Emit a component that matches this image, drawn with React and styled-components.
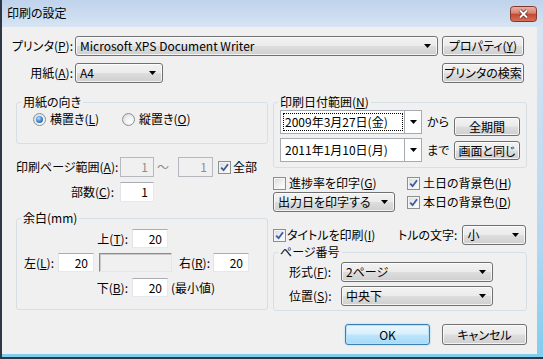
import React from 'react'
import styled, { createGlobalStyle, css } from 'styled-components'

const GlobalStyle = createGlobalStyle`
  html, body { margin: 0; padding: 0; background: #ffffff; }
  body {
    font-family: "Noto Sans CJK JP", "Liberation Sans", sans-serif;
    font-feature-settings: "palt";
    font-size: 12px;
    line-height: 14px;
    color: #000;
  }
  u { text-decoration: underline; text-underline-offset: 1px; }
`

const Window = styled.div`
  width: 543px;
  height: 359px;
  box-sizing: border-box;
  display: flex;
  flex-direction: column;
  background: linear-gradient(#bfd3ec 0, #d7e4f3 27px, #b4d6f0 70%, #7fcdee 100%);
  border-left: 2px solid #2e3845;
  border-bottom: 2px solid #2e3845;
  overflow: hidden;
`

const TitleBar = styled.div`
  height: 27px;
  flex: none;
  display: flex;
  align-items: center;
  justify-content: space-between;
  padding: 0 6px 0 5px;
`

const Title = styled.span`
  margin-top: -1px;
`

const Client = styled.div`
  flex: 1;
  margin: 0 6px 3px 0;
  background: #f0f0f0;
  padding: 9px 10px 0 14px;
  display: flex;
  flex-direction: column;
`

const TopGrid = styled.div`
  display: grid;
  grid-template-columns: 57px 363px 84px;
  grid-auto-rows: 20px;
  column-gap: 2px;
  row-gap: 7px;
  align-items: center;
  & > span { justify-self: end; }
`

const Label = styled.span`
  text-align: ${p => (p.$left ? 'left' : 'right')};
  white-space: nowrap;
  ${p => p.$w && css`width: ${p.$w}px; flex: none;`}
  ${p => p.$ml && css`margin-left: ${p.$ml}px;`}
  color: ${p => (p.$dim ? '#8d8d8d' : '#000')};
`

const buttonFace = css`
  border: 1px solid #707070;
  border-radius: 3px;
  background: linear-gradient(#f2f2f2 0%, #ebebeb 48%, #dddddd 52%, #cfcfcf 100%);
  box-shadow: inset 0 0 0 1px rgba(255, 255, 255, 0.75);
`

const Button = styled.div`
  ${buttonFace}
  box-sizing: border-box;
  width: ${p => p.$w}px;
  height: ${p => p.$h || 20}px;
  justify-self: end;
  display: flex;
  align-items: center;
  justify-content: center;
  white-space: nowrap;
  ${p =>
    p.$default &&
    css`
      border-color: #3c7fb1;
      background: linear-gradient(#eaf6fd 0%, #d9f0fc 48%, #bee6fd 52%, #a7d9f5 100%);
      box-shadow: inset 0 0 0 1px #b9e0f7, 0 0 2px #8fd0f2;
    `}
`

const Combo = styled.div`
  ${buttonFace}
  box-sizing: border-box;
  width: ${p => p.$w}px;
  height: 20px;
  display: flex;
  align-items: center;
  justify-content: space-between;
  padding: 0 6px 0 4px;
  white-space: nowrap;
  flex: none;
  ${p => p.$ml && css`margin-left: ${p.$ml}px;`}
`

const ArrowIcon = () => (
  <svg width="7" height="4" viewBox="0 0 7 4" style={{ flex: 'none' }}>
    <path d="M0 0h7L3.5 4z" fill="#000" />
  </svg>
)

const Middle = styled.div`
  display: grid;
  grid-template-columns: 252px 254px;
  column-gap: 5px;
  margin-top: 12px;
`

const Column = styled.div`
  display: flex;
  flex-direction: column;
`

const Group = styled.fieldset`
  margin: ${p => p.$mt || 0}px 0 0 0;
  padding: 0;
  min-width: 0;
  border: 1px solid #d5dfe5;
  border-radius: 3px;
`

const Legend = styled.legend`
  padding: 0 2px;
  margin-left: 4px;
  line-height: 14px;
`

const GroupBody = styled.div`
  padding: ${p => p.$pad};
`

const RadioRow = styled.div`
  display: grid;
  grid-template-columns: 89px auto;
  height: 14px;
  align-items: center;
`

const Option = styled.label`
  display: flex;
  align-items: center;
  white-space: nowrap;
  ${p => p.$w && css`width: ${p.$w}px; flex: none;`}
`

const RadioDot = styled.span`
  width: 13px;
  height: 13px;
  box-sizing: border-box;
  border-radius: 50%;
  border: 1px solid #8a8f96;
  background: radial-gradient(circle at 65% 65%, #ffffff 0, #f1f1f1 40%, #cfd2d6 100%);
  display: inline-flex;
  align-items: center;
  justify-content: center;
  margin-right: 4px;
  flex: none;
  &::after {
    content: '';
    width: 7px;
    height: 7px;
    border-radius: 50%;
    background: radial-gradient(circle at 40% 35%, #bfe4fb 0, #4a8fd6 45%, #10478f 100%);
    display: ${p => (p.$on ? 'block' : 'none')};
  }
`

const CheckBox = styled.span`
  width: 13px;
  height: 13px;
  box-sizing: border-box;
  border: 1px solid #8e8f8f;
  background: linear-gradient(135deg, #d9dadb 0%, #f2f2f2 60%, #ffffff 100%);
  box-shadow: inset 0 0 0 1px #f4f4f4;
  display: inline-flex;
  align-items: center;
  justify-content: center;
  margin-right: ${p => p.$gap ?? 3}px;
  flex: none;
`

const Check = ({ on, gap, children, w }) => (
  <Option $w={w}>
    <CheckBox $gap={gap}>
      {on && (
        <svg width="9" height="9" viewBox="0 0 9 9">
          <path d="M1.2 4.6 L3.6 7.2 L8 1.2" fill="none" stroke="#3b5aa0" strokeWidth="1.8" />
        </svg>
      )}
    </CheckBox>
    <span>{children}</span>
  </Option>
)

const FormRow = styled.div`
  display: flex;
  align-items: center;
  height: ${p => p.$h || 20}px;
  margin-top: ${p => p.$mt || 0}px;
  ${p => p.$ml && css`padding-left: ${p.$ml}px;`}
`

const Field = styled.div`
  box-sizing: border-box;
  width: ${p => p.$w}px;
  height: ${p => p.$h || 20}px;
  flex: none;
  border: 1px solid;
  border-color: ${p => (p.$disabled ? '#b5b9bd' : '#abadb3 #e3e9ef #e3e9ef #e2e3ea')};
  background: ${p => (p.$disabled ? '#f0f0f0' : '#ffffff')};
  color: ${p => (p.$disabled ? '#8d8d8d' : '#000')};
  display: flex;
  align-items: center;
  justify-content: flex-end;
  padding-right: 5px;
  ${p => p.$ml && css`margin-left: ${p.$ml}px;`}
`

const Sunken = styled.div`
  box-sizing: border-box;
  width: 73px;
  height: 19px;
  flex: none;
  margin-left: 5px;
  border: 1px solid;
  border-color: #8c8c8c #e6e6e6 #e6e6e6 #8c8c8c;
  box-shadow: inset 1px 1px 0 #c8c8c8;
  background: #f0f0f0;
`

const DateArea = styled.div`
  display: flex;
  align-items: flex-start;
`

const DateCol = styled.div`
  display: flex;
  flex-direction: column;
  gap: 4px;
`

const DateRow = styled.div`
  display: flex;
  align-items: center;
  gap: 5px;
`

const DateBox = styled.div`
  box-sizing: border-box;
  width: 142px;
  height: 24px;
  display: flex;
  border: 1px solid #a6abb2;
  background: #fff;
`

const DateText = styled.span`
  flex: 1;
  margin: 2px 1px 2px 2px;
  padding-left: 1px;
  display: flex;
  align-items: center;
  white-space: nowrap;
  border: 1px dotted ${p => (p.$focus ? '#000' : 'transparent')};
`

const DateDrop = styled.span`
  width: 16px;
  flex: none;
  border-left: 1px solid #a6abb2;
  display: flex;
  align-items: center;
  justify-content: center;
`

const DateButtons = styled.div`
  margin-left: auto;
  padding-top: 7px;
  display: flex;
  flex-direction: column;
  gap: 5px;
`

const CheckGrid = styled.div`
  display: grid;
  grid-template-columns: 134px auto;
  grid-template-rows: 14px 20px;
  row-gap: 2px;
  align-items: center;
  margin-top: 8px;
`

const PageGrid = styled.div`
  display: grid;
  grid-template-columns: 52px 152px;
  grid-auto-rows: 20px;
  row-gap: 4px;
  align-items: center;
`

const Footer = styled.div`
  display: flex;
  justify-content: flex-end;
  gap: 12px;
  margin-top: 13px;
`

const CloseIcon = () => (
  <svg width="27" height="16" viewBox="0 0 27 16">
    <defs>
      <linearGradient id="closeFace" x1="0" y1="0" x2="0" y2="1">
        <stop offset="0" stopColor="#eab3a6" />
        <stop offset="0.45" stopColor="#d9826f" />
        <stop offset="0.5" stopColor="#c5472f" />
        <stop offset="1" stopColor="#d4735a" />
      </linearGradient>
    </defs>
    <rect x="0.5" y="0.5" width="26" height="15" rx="3" fill="url(#closeFace)" stroke="#7e3a30" />
    <path d="M10 4.5 L17 11.5 M17 4.5 L10 11.5" stroke="#5a2219" strokeWidth="3.4" />
    <path d="M10 4.5 L17 11.5 M17 4.5 L10 11.5" stroke="#ffffff" strokeWidth="2" />
  </svg>
)

export default function App() {
  return (
    <>
      <GlobalStyle />
      <Window>
        <TitleBar>
          <Title>印刷の設定</Title>
          <CloseIcon />
        </TitleBar>
        <Client>
          <TopGrid>
            <Label>プリンタ(<u>P</u>):</Label>
            <Combo $w={363}>
              <span>Microsoft XPS Document Writer</span>
              <ArrowIcon />
            </Combo>
            <Button $w={82}>プロパティ(<u>Y</u>)</Button>
            <Label>用紙(<u>A</u>):</Label>
            <Combo $w={88}>
              <span>A4</span>
              <ArrowIcon />
            </Combo>
            <Button $w={82}>プリンタの検索</Button>
          </TopGrid>

          <Middle>
            <Column>
              <Group>
                <Legend>用紙の向き</Legend>
                <GroupBody $pad="3px 0 17px 16px">
                  <RadioRow>
                    <Option>
                      <RadioDot $on />
                      <span>横置き(<u>L</u>)</span>
                    </Option>
                    <Option>
                      <RadioDot />
                      <span>縦置き(<u>O</u>)</span>
                    </Option>
                  </RadioRow>
                </GroupBody>
              </Group>

              <FormRow $mt={13}>
                <Label $w={98}>印刷ページ範囲(<u>A</u>):</Label>
                <Field $w={34} $ml={6} $disabled>1</Field>
                <Label $dim $ml={3}>～</Label>
                <Field $w={35} $ml={9} $disabled>1</Field>
                <Option style={{ marginLeft: 5 }}>
                  <Check on gap={2}>全部</Check>
                </Option>
              </FormRow>
              <FormRow $mt={5}>
                <Label $w={98}>部数(<u>C</u>):</Label>
                <Field $w={34} $ml={6}>1</Field>
              </FormRow>

              <Group $mt={9}>
                <Legend>余白(mm)</Legend>
                <GroupBody $pad="4px 0 12px 0">
                  <FormRow $h={19} $ml={71}>
                    <Label $w={40}>上(<u>T</u>):</Label>
                    <Field $w={36} $h={19} $ml={4}>20</Field>
                  </FormRow>
                  <FormRow $h={19} $mt={5} $ml={2}>
                    <Label $w={35}>左(<u>L</u>):</Label>
                    <Field $w={36} $h={19} $ml={4}>20</Field>
                    <Sunken />
                    <Label $w={38}>右(<u>R</u>):</Label>
                    <Field $w={36} $h={19} $ml={3}>20</Field>
                  </FormRow>
                  <FormRow $h={19} $mt={6} $ml={71}>
                    <Label $w={40}>下(<u>B</u>):</Label>
                    <Field $w={36} $h={19} $ml={4}>20</Field>
                    <Label $ml={3}>(最小値)</Label>
                  </FormRow>
                </GroupBody>
              </Group>
            </Column>

            <Column>
              <Group>
                <Legend>印刷日付範囲(<u>N</u>)</Legend>
                <GroupBody $pad="1px 6px 5px 6px">
                  <DateArea>
                    <DateCol>
                      <DateRow>
                        <DateBox>
                          <DateText $focus>2009年3月27日(金)</DateText>
                          <DateDrop><ArrowIcon /></DateDrop>
                        </DateBox>
                        <span>から</span>
                      </DateRow>
                      <DateRow>
                        <DateBox>
                          <DateText>2011年1月10日(月)</DateText>
                          <DateDrop><ArrowIcon /></DateDrop>
                        </DateBox>
                        <span>まで</span>
                      </DateRow>
                    </DateCol>
                    <DateButtons>
                      <Button $w={66} $h={19}>全期間</Button>
                      <Button $w={66} $h={19}>画面と同じ</Button>
                    </DateButtons>
                  </DateArea>
                </GroupBody>
              </Group>

              <CheckGrid>
                <Check>進捗率を印字(<u>G</u>)</Check>
                <Check on>土日の背景色(<u>H</u>)</Check>
                <Combo $w={122}>
                  <span>出力日を印字する</span>
                  <ArrowIcon />
                </Combo>
                <Check on>本日の背景色(<u>D</u>)</Check>
              </CheckGrid>

              <FormRow $mt={13}>
                <Check on gap={1} w={125}>タイトルを印刷(<u>I</u>)</Check>
                <Label>トルの文字:</Label>
                <Combo $w={64} $ml={5}>
                  <span>小</span>
                  <ArrowIcon />
                </Combo>
              </FormRow>

              <Group>
                <Legend>ページ番号</Legend>
                <GroupBody $pad="3px 0 4px 15px">
                  <PageGrid>
                    <Label $left>形式(<u>F</u>):</Label>
                    <Combo $w={152}>
                      <span>2ページ</span>
                      <ArrowIcon />
                    </Combo>
                    <Label $left>位置(<u>S</u>):</Label>
                    <Combo $w={152}>
                      <span>中央下</span>
                      <ArrowIcon />
                    </Combo>
                  </PageGrid>
                </GroupBody>
              </Group>
            </Column>
          </Middle>

          <Footer>
            <Button $w={85} $h={21} $default>OK</Button>
            <Button $w={85} $h={21}>キャンセル</Button>
          </Footer>
        </Client>
      </Window>
    </>
  )
}
